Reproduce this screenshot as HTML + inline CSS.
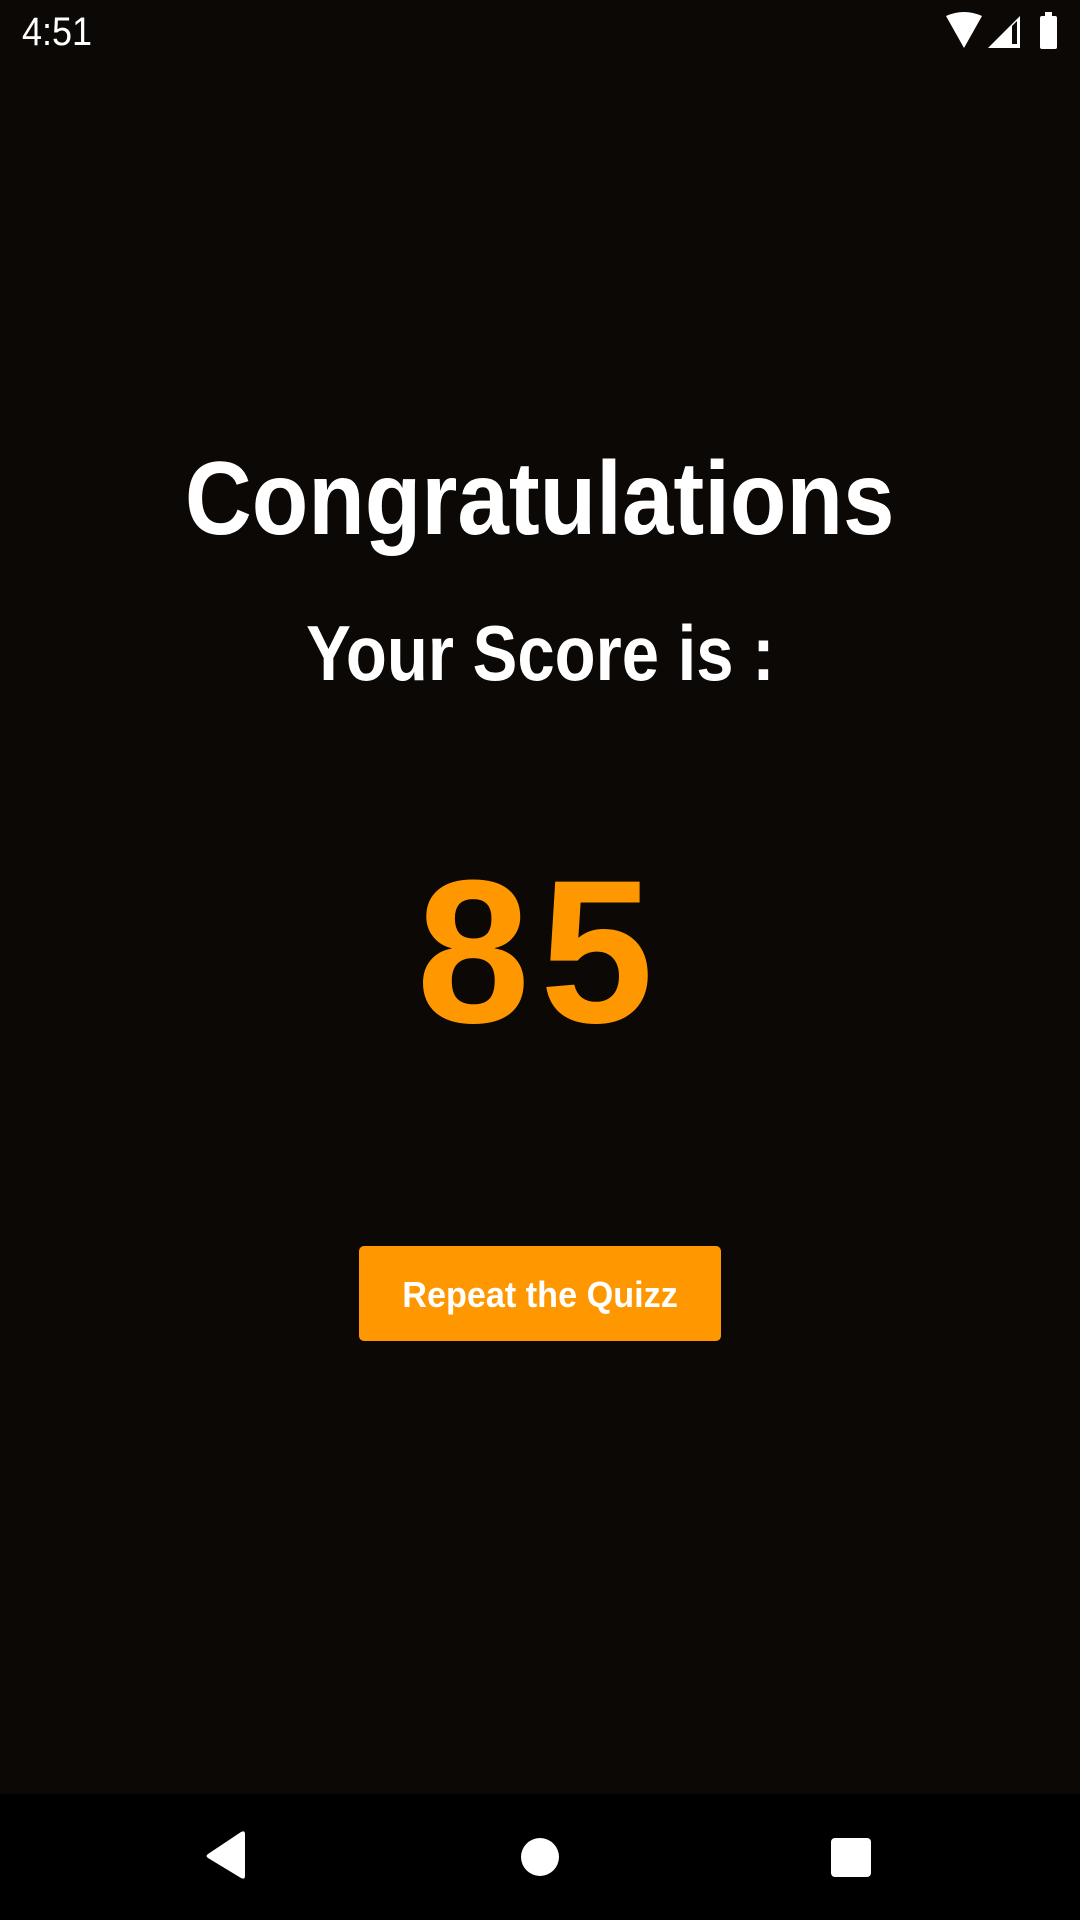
<!DOCTYPE html>
<html><head><meta charset="utf-8"><style>
html,body{margin:0;padding:0}
body{width:1080px;height:1920px;background:#0b0805;position:relative;overflow:hidden;font-family:"Liberation Sans",Arial,sans-serif;color:#fff}
.t{position:absolute;left:0;width:1080px;text-align:center;font-weight:bold;white-space:nowrap;font-family:"Liberation Sans",Arial,sans-serif}
.t span{display:inline-block}
</style></head><body>
<div style="position:absolute;left:22px;top:8px;font-size:40px;line-height:48px;color:#fff;transform:scaleX(0.9);transform-origin:left">4:51</div>
<svg style="position:absolute;left:940px;top:12px" width="130" height="40" viewBox="0 0 130 40">
<path d="M6 4 Q24 -4 42 4 L24 36 Z" fill="#fff"/>
<path d="M48 36 L80 4 L80 36 Z" fill="#fff"/>
<path d="M72 14 L77 9 L77 32 L72 32 Z" fill="#0b0805"/>
<rect x="100" y="4" width="17" height="33" rx="2" fill="#fff"/>
<rect x="105" y="0" width="7" height="5" fill="#fff"/>
</svg>
<div class="t" style="top:447px;font-size:104px;line-height:104px"><span style="transform:scaleX(0.89)">Congratulations</span></div>
<div class="t" style="top:614px;font-size:78px;line-height:78px"><span style="transform:scaleX(0.86)">Your Score is :</span></div>
<div class="t" style="top:850px;font-size:204px;line-height:204px;color:#ff9800;letter-spacing:10px;font-family:'Liberation Sans','DejaVu Sans',sans-serif"><span>85</span></div>
<div style="position:absolute;left:359px;top:1246px;width:362px;height:95px;background:#ff9800;border-radius:5px"></div>
<div class="t" style="top:1277px;font-size:36px;line-height:36px"><span style="transform:scaleX(0.95)">Repeat the Quizz</span></div>
<div style="position:absolute;left:0;top:1794px;width:1080px;height:126px;background:#000"></div>
<svg style="position:absolute;left:0;top:1794px" width="1080" height="126">
<path d="M245 40 L245 82 Q245 86 241 84 L208 64 Q205 62 208 60 L241 38 Q245 36 245 40 Z" fill="#fff"/>
<circle cx="540" cy="63" r="19" fill="#fff"/>
<rect x="831" y="44" width="40" height="39" rx="4" fill="#fff"/>
</svg>
</body></html>
